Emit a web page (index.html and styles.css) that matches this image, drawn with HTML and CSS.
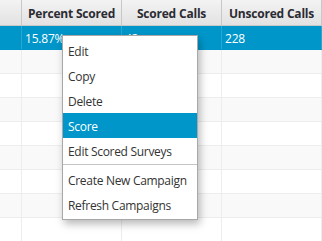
FILE: index.html
```html
<!DOCTYPE html>
<html>
<head>
<meta charset="utf-8">
<link rel="stylesheet" href="styles.css">
</head>
<body>
<div class="table">
  <div class="header">
    <div class="hcell"></div>
    <div class="hcell">Percent Scored</div>
    <div class="hcell">Scored Calls</div>
    <div class="hcell last">Unscored Calls</div>
  </div>
  <div class="row selected">
    <div class="cell"></div>
    <div class="cell">15.87%</div>
    <div class="cell">43</div>
    <div class="cell">228</div>
  </div>
  <div class="row odd"><div class="cell"></div><div class="cell"></div><div class="cell"></div><div class="cell"></div></div>
  <div class="row"><div class="cell"></div><div class="cell"></div><div class="cell"></div><div class="cell"></div></div>
  <div class="row odd"><div class="cell"></div><div class="cell"></div><div class="cell"></div><div class="cell"></div></div>
  <div class="row"><div class="cell"></div><div class="cell"></div><div class="cell"></div><div class="cell"></div></div>
  <div class="row odd"><div class="cell"></div><div class="cell"></div><div class="cell"></div><div class="cell"></div></div>
  <div class="row"><div class="cell"></div><div class="cell"></div><div class="cell"></div><div class="cell"></div></div>
  <div class="row odd"><div class="cell"></div><div class="cell"></div><div class="cell"></div><div class="cell"></div></div>
  <div class="row"><div class="cell"></div><div class="cell"></div><div class="cell"></div><div class="cell"></div></div>
</div>
<div class="menu">
  <div class="item">Edit</div>
  <div class="item">Copy</div>
  <div class="item">Delete</div>
  <div class="item active">Score</div>
  <div class="item">Edit Scored Surveys</div>
  <div class="sep"></div>
  <div class="item">Create New Campaign</div>
  <div class="item">Refresh Campaigns</div>
</div>
</body>
</html>
```
FILE: styles.css
```css
html, body {
  margin: 0;
  padding: 0;
  width: 322px;
  height: 241px;
  overflow: hidden;
  background: #fff;
  font-family: "Open Sans", "Noto Sans", sans-serif;
  font-size: 12px;
}
.table {
  width: 322px;
}
.header {
  display: grid;
  grid-template-columns: 22px 100px 100px 100px;
  height: 26px;
  box-sizing: border-box;
  border-bottom: 1px solid #c8c8c8;
  background: linear-gradient(#f3f3f3, #e2e2e2);
}
.hcell {
  border-right: 1px solid #c8c8c8;
  display: flex;
  align-items: center;
  justify-content: center;
  padding-top: 2px;
  font-weight: bold;
  color: #2b2b33;
  font-size: 12px;
  letter-spacing: -0.2px;
  white-space: nowrap;
}
.row {
  display: grid;
  grid-template-columns: 22px 100px 100px 100px;
  height: 24px;
  box-sizing: border-box;
  border-bottom: 1px solid #ededed;
  background: #fff;
}
.row.odd {
  background: #f9f9f9;
}
.cell {
  border-right: 1px solid #ededed;
  display: flex;
  align-items: center;
  padding-left: 3px;
  padding-top: 1px;
  color: #333;
  white-space: nowrap;
  overflow: hidden;
  letter-spacing: -0.2px;
}
.row.selected {
  background: #0096c9;
  border-bottom-color: #0096c9;
}
.row.selected .cell {
  color: #fff;
  border-right-color: #2aa6d2;
}
.menu {
  position: absolute;
  left: 62px;
  top: 35px;
  width: 136px;
  box-sizing: border-box;
  background: #fff;
  border: 1px solid #a8a8a8;
  padding: 2px 0;
  box-shadow: 2px 4px 8px rgba(0,0,0,0.28);
}
.item {
  height: 25px;
  box-sizing: border-box;
  display: flex;
  align-items: center;
  padding-left: 5px;
  padding-top: 2px;
  color: #333;
  white-space: nowrap;
  letter-spacing: -0.3px;
}
.item.active {
  background: #0096c9;
  color: #fff;
}
.sep {
  height: 1px;
  margin: 1px 0 2px;
  background: #c4c4c4;
}
```
